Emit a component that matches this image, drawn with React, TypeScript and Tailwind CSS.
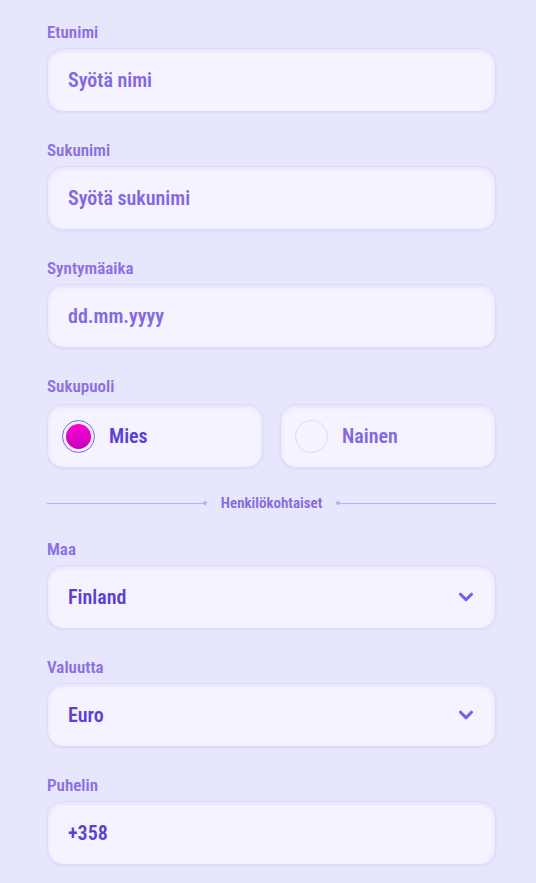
import { ChevronDown } from "lucide-react"

function Label({ children }: { children: string }) {
  return <div className="text-[17px] font-semibold leading-5 text-[#8b6fe3]">{children}</div>
}

const box =
  "flex h-[64px] items-center rounded-2xl border border-[#e0d9ff] bg-[#f5f3ff] px-5 shadow-[inset_0_2px_4px_rgba(167,139,250,0.18),0_1px_2px_rgba(167,139,250,0.15)]"

const valueText = "text-[20px] font-semibold"

function TextField({ label, value, placeholder }: { label: string; value?: string; placeholder?: string }) {
  return (
    <div className="flex flex-col gap-[6px]">
      <Label>{label}</Label>
      <div className={box}>
        {value ? (
          <span className={valueText + " text-[#5b3fd8]"}>{value}</span>
        ) : (
          <span className={valueText + " text-[#8468e2]"}>{placeholder}</span>
        )}
      </div>
    </div>
  )
}

function SelectField({ label, value }: { label: string; value: string }) {
  return (
    <div className="flex flex-col gap-[6px]">
      <Label>{label}</Label>
      <div className={box + " justify-between pr-[18px]"}>
        <span className={valueText + " text-[#5b3fd8]"}>{value}</span>
        <ChevronDown className="h-[22px] w-[22px] text-[#7c5ce8]" strokeWidth={3.4} />
      </div>
    </div>
  )
}

export default function App() {
  return (
    <div
      className="min-h-[883px] bg-[#e6e6fc] pl-[47px] pr-[40px] pt-[22px] font-stretch-condensed"
      style={{ fontFamily: "Roboto, 'Liberation Sans', sans-serif" }}
    >
      <div className="flex flex-col gap-[28px]">
        <TextField label="Etunimi" placeholder="Syötä nimi" />
        <TextField label="Sukunimi" placeholder="Syötä sukunimi" />
        <TextField label="Syntymäaika" placeholder="dd.mm.yyyy" />

        <div className="flex flex-col gap-[8px]">
          <Label>Sukupuoli</Label>
          <div className="grid grid-cols-2 gap-[17px]">
            <div className={box + " gap-[14px] px-[14px]"}>
              <span className="flex h-[33px] w-[33px] items-center justify-center rounded-full border border-[#7d62e0]">
                <span className="h-[25px] w-[25px] rounded-full bg-gradient-to-b from-[#ff00d4] to-[#c400bc]" />
              </span>
              <span className={valueText + " text-[#5b3fd8]"}>Mies</span>
            </div>
            <div className={box + " gap-[14px] px-[14px]"}>
              <span className="h-[33px] w-[33px] rounded-full border border-[#ddd6fe]" />
              <span className={valueText + " text-[#8468e2]"}>Nainen</span>
            </div>
          </div>
        </div>

        <div className="-mt-px mb-0 flex h-[16px] items-center gap-[14px]">
          <div className="flex flex-1 items-center">
            <div className="h-px flex-1 bg-[#b9aef0]" />
            <div className="h-[4px] w-[4px] rounded-full bg-[#b9aef0]" />
          </div>
          <span className="text-[15px] font-semibold text-[#8468e2]">Henkilökohtaiset</span>
          <div className="flex flex-1 items-center">
            <div className="h-[4px] w-[4px] rounded-full bg-[#b9aef0]" />
            <div className="h-px flex-1 bg-[#b9aef0]" />
          </div>
        </div>

        <SelectField label="Maa" value="Finland" />
        <SelectField label="Valuutta" value="Euro" />
        <TextField label="Puhelin" value="+358" />
      </div>
    </div>
  )
}
